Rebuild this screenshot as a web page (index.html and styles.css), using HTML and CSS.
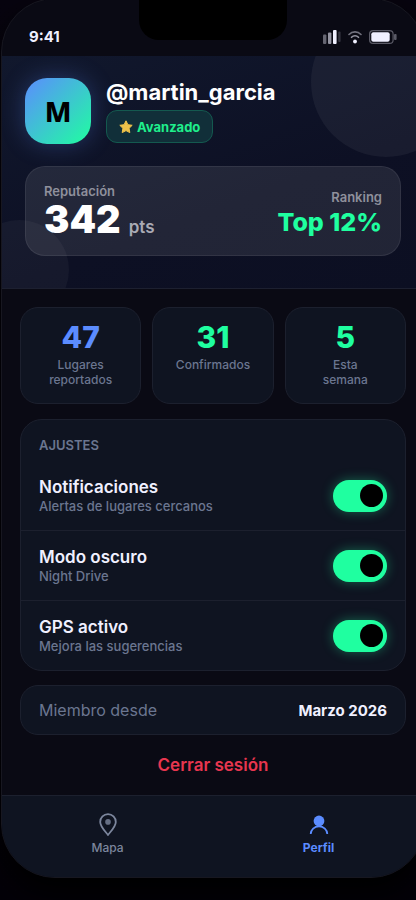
FILE: index.html
```html
<!DOCTYPE html>
<html lang="es">
<head>
<meta charset="utf-8">
<meta name="viewport" content="width=device-width, initial-scale=1">
<title>Perfil</title>
<link rel="stylesheet" href="styles.css">
</head>
<body>
<div class="phone">
  <div class="notch"></div>
  <div class="status">
    <span class="time">9:41</span>
    <div class="status-icons">
      <svg width="18" height="14" viewBox="0 0 18 14" fill="#f0f0ff">
        <rect x="0" y="4.500" width="3.400" height="9.500" rx="1" opacity=".4"/>
        <rect x="5" y="2.500" width="3.400" height="11.500" rx="1" opacity=".6"/>
        <rect x="10" y="0" width="3.600" height="14" rx="1"/>
        <rect x="15.200" y="1.500" width="2.400" height="10.500" rx="1" opacity=".18"/>
      </svg>
      <svg width="14" height="14" viewBox="0 0 14 14" fill="none" stroke="#f0f0ff" stroke-width="1.600" stroke-linecap="round">
        <path d="M1 4.500C4.300 1 9.700 1 13 4.500" opacity=".45"/>
        <path d="M3.500 7.300C5.500 5.300 8.500 5.300 10.500 7.300" opacity=".6"/>
        <circle cx="7" cy="11.500" r="1.900" fill="#f0f0ff" stroke="none"/>
      </svg>
      <svg width="28" height="14" viewBox="0 0 28 14">
        <rect x=".6" y=".6" width="23.500" height="12.800" rx="3.500" fill="none" stroke="#f0f0ff" stroke-width="1.200" opacity=".35"/>
        <rect x="2.300" y="2.300" width="18.400" height="9.400" rx="2" fill="#f0f0ff"/>
        <rect x="25" y="4" width="2.600" height="6" rx="1" fill="#f0f0ff" opacity=".35"/>
      </svg>
    </div>
  </div>

  <header class="hero">
    <div class="identity">
      <div class="avatar">M</div>
      <div class="who">
        <h1>@martin_garcia</h1>
        <span class="badge">
          <svg width="14" height="14" viewBox="0 0 14 14"><path d="M7 .8 8.900 4.700 13.200 5.300 10.100 8.300 10.800 12.600 7 10.600 3.200 12.600 3.900 8.300 .8 5.300 5.100 4.700Z" fill="#eec24a" stroke="#eec24a" stroke-width="1" stroke-linejoin="round"/></svg>
          Avanzado
        </span>
      </div>
    </div>
    <div class="score">
      <div>
        <div class="score-label">Reputación</div>
        <div class="points"><b>342</b><small>pts</small></div>
      </div>
      <div class="rank">
        <div class="score-label">Ranking</div>
        <div class="rank-value">Top 12%</div>
      </div>
    </div>
  </header>

  <main>
    <section class="stats">
      <div class="card stat"><strong class="blue">47</strong><span>Lugares reportados</span></div>
      <div class="card stat"><strong>31</strong><span>Confirmados</span></div>
      <div class="card stat"><strong>5</strong><span>Esta<br>semana</span></div>
    </section>

    <section class="card settings">
      <h2>AJUSTES</h2>
      <label class="row" for="notif">
        <span class="row-text"><b>Notificaciones</b><span>Alertas de lugares cercanos</span></span>
        <input type="checkbox" id="notif" checked>
      </label>
      <label class="row" for="dark">
        <span class="row-text"><b>Modo oscuro</b><span>Night Drive</span></span>
        <input type="checkbox" id="dark" checked>
      </label>
      <label class="row" for="gps">
        <span class="row-text"><b>GPS activo</b><span>Mejora las sugerencias</span></span>
        <input type="checkbox" id="gps" checked>
      </label>
    </section>

    <section class="card member">
      <span>Miembro desde</span><b>Marzo 2026</b>
    </section>

    <button class="logout" type="button">Cerrar sesión</button>
  </main>

  <nav>
    <a href="#mapa">
      <svg width="24" height="24" viewBox="0 0 24 24" fill="none" stroke="currentColor" stroke-width="1.800" stroke-linejoin="round"><path d="M12 22C9.500 18.500 4.200 13.500 4.200 8.900a7.800 7.800 0 0 1 15.600 0C19.800 13.500 14.500 18.500 12 22Z"/><circle cx="12" cy="8.900" r="2.800" fill="currentColor" stroke="none" opacity=".8"/></svg>
      Mapa
    </a>
    <a href="#perfil" class="active">
      <svg width="24" height="24" viewBox="0 0 24 24" fill="none" stroke="currentColor" stroke-width="1.800"><circle cx="12" cy="8" r="5.400" fill="currentColor" stroke="none"/><path d="M3.700 21A8.300 7.600 0 0 1 20.300 21"/></svg>
      Perfil
    </a>
  </nav>
</div>
</body>
</html>
```

FILE: styles.css
```css
* { box-sizing: border-box; }

body {
  margin: 0;
  min-height: 100vh;
  overflow: hidden;
  background: linear-gradient(#07040f, #04020a 60%, #030108);
  color: #f0f0ff;
  font-family: Inter, "Liberation Sans", sans-serif;
}

.phone {
  position: relative;
  width: calc(100% + 8px);
  margin: -2px 0 0 1px;
  overflow: hidden;
  border: 1px solid #171720;
  border-radius: 54px;
  background: #0a0a14;
  box-shadow: 0 16px 32px #000;
}

.notch {
  position: absolute;
  top: 0;
  left: 50%;
  width: 148px;
  height: 41px;
  margin-left: -74px;
  border-radius: 0 0 20px 20px;
  background: #000;
}

.status {
  display: flex;
  justify-content: space-between;
  align-items: flex-end;
  height: 57px;
  padding: 0 27px 12px;
}
.time { font-size: 15px; line-height: 14px; font-weight: 700; }
.status-icons { display: flex; gap: 7px; }
.status-icons svg { display: block; }

.hero {
  position: relative;
  overflow: hidden;
  padding: 22px 23px 32px;
  border-bottom: 1px solid #1d2030;
  background: linear-gradient(160deg, #11182d, #0d1024 60%, #0c0f22);
}
.hero::before,
.hero::after {
  content: "";
  position: absolute;
  border-radius: 50%;
  background: rgba(255, 255, 255, 0.05);
}
.hero::before { top: -49px; right: -37px; width: 150px; height: 150px; }
.hero::after { bottom: -32px; left: -33px; width: 100px; height: 100px; background: rgba(255, 255, 255, 0.04); }

.identity { display: flex; gap: 15px; margin-bottom: 22px; }
.avatar {
  display: grid;
  place-items: center;
  width: 66px;
  height: 66px;
  border-radius: 22px;
  background: linear-gradient(135deg, #5b8cff, #1fffa0);
  box-shadow: 0 0 24px rgba(91, 140, 255, 0.3);
  color: #000;
  font-family: "Noto Sans", sans-serif;
  font-size: 28px;
  line-height: 32px;
  font-weight: 800;
}
.who { display: flex; flex-direction: column; align-items: flex-start; gap: 4px; }
h1 { margin: 0; font-size: 22px; line-height: 28px; font-weight: 700; color: #fff; }
.badge {
  display: flex;
  align-items: center;
  gap: 4px;
  height: 33px;
  padding: 0 12px;
  border: 1px solid #14594f;
  border-radius: 11px;
  background: #112f39;
  color: #1fef8c;
  font-size: 13px;
  font-weight: 700;
}

.score {
  position: relative;
  z-index: 1;
  display: flex;
  justify-content: space-between;
  align-items: flex-end;
  padding: 16px 18px;
  border: 1px solid rgba(255, 255, 255, 0.07);
  border-radius: 20px;
  background: rgba(255, 255, 255, 0.09);
}
.score-label { font-size: 13px; line-height: 16px; font-weight: 600; color: #8f909c; }
.points { display: flex; align-items: baseline; gap: 8px; height: 40px; }
.points b { font-size: 38px; line-height: 40px; font-weight: 900; color: #fff; }
.points small { font-size: 17px; line-height: 20px; font-weight: 600; color: #a9aab4; }
.rank { text-align: right; }
.rank-value { font-size: 25px; line-height: 34px; font-weight: 800; color: #1fffa0; }

main { display: flex; flex-direction: column; padding: 18px 18px 0; }
.card { border: 1px solid #1c202e; border-radius: 22px; background: #0f1421; }

.stats { display: grid; grid-template-columns: repeat(3, 1fr); gap: 11px; margin-bottom: 15px; }
.stat {
  display: flex;
  flex-direction: column;
  align-items: center;
  gap: 3px;
  padding: 12px 18px 16px;
  border-radius: 18px;
  text-align: center;
}
.stat strong { font-size: 30px; line-height: 34px; font-weight: 800; color: #1fffa0; }
.stat .blue { color: #5b8cff; }
.stat span { font-size: 12px; line-height: 15px; font-weight: 500; color: #6b7690; }

.settings { padding-top: 17px; margin-bottom: 14px; }
h2 { margin: 0 18px 8px; font-size: 13px; line-height: 16px; font-weight: 600; color: #6b7690; }
.row {
  display: flex;
  justify-content: space-between;
  align-items: center;
  height: 70px;
  padding: 0 18px;
  border-bottom: 1px solid #1c202e;
}
.row:last-child { height: 69px; border-bottom: 0; }
.row-text { display: flex; flex-direction: column; }
.row-text b { font-size: 17px; line-height: 20px; font-weight: 600; }
.row-text span { font-size: 13px; line-height: 18px; color: #6b7690; font-weight: 500; }

input[type="checkbox"] {
  appearance: none;
  display: flex;
  align-items: center;
  justify-content: flex-end;
  width: 54px;
  height: 32px;
  margin: 0;
  padding: 0 4px;
  border-radius: 16px;
  background: #1fffa0;
  box-shadow: 0 0 12px rgba(31, 255, 160, 0.35);
}
input[type="checkbox"]::before {
  content: "";
  width: 23px;
  height: 23px;
  border-radius: 50%;
  background: #000;
}
input[type="checkbox"]:not(:checked) { justify-content: flex-start; background: #2a3044; box-shadow: none; }

.member {
  display: flex;
  justify-content: space-between;
  align-items: center;
  height: 50px;
  padding: 0 18px;
  border-radius: 18px;
}
.member span { font-size: 16px; color: #6b7690; }
.member b { font-size: 15px; font-weight: 700; }

.logout {
  height: 60px;
  border: 0;
  background: none;
  color: #e8364f;
  font: 600 17px Inter, "Liberation Sans", sans-serif;
}

nav {
  display: flex;
  height: 82px;
  padding-top: 17px;
  border-top: 1px solid #1c202e;
  background: #0f1421;
}
nav a {
  flex: 1;
  display: flex;
  flex-direction: column;
  align-items: center;
  gap: 4px;
  color: #7c869d;
  font-size: 12px;
  line-height: 14px;
  font-weight: 500;
  text-decoration: none;
}
nav .active { color: #5b8cff; font-weight: 700; }
```
